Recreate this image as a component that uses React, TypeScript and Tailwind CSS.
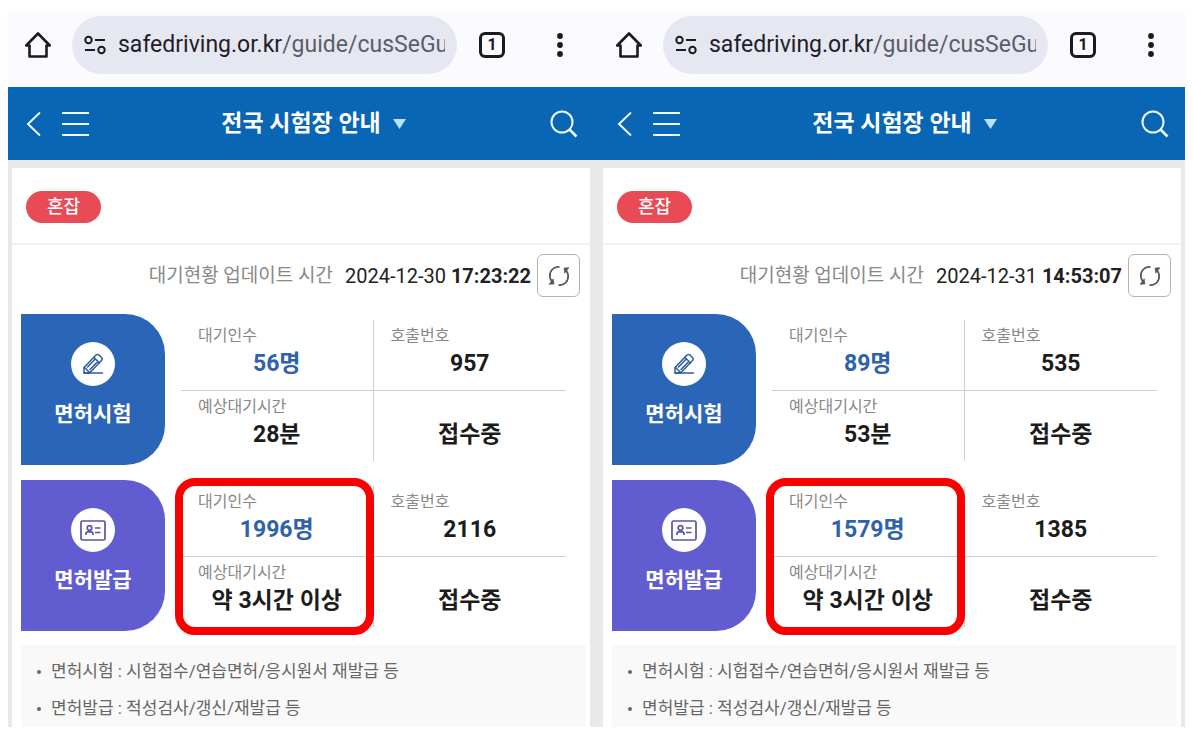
import { ReactNode } from "react";

interface Desk {
  name: string;
  kind: "exam" | "issue";
  waiting: string;
  waitTime: string;
  calling: string;
  status: string;
  highlighted?: boolean;
}

interface Snapshot {
  date: string;
  time: string;
  desks: Desk[];
}

const snapshots: Snapshot[] = [
  {
    date: "2024-12-30",
    time: "17:23:22",
    desks: [
      {
        name: "면허시험",
        kind: "exam",
        waiting: "56명",
        waitTime: "28분",
        calling: "957",
        status: "접수중",
      },
      {
        name: "면허발급",
        kind: "issue",
        waiting: "1996명",
        waitTime: "약 3시간 이상",
        calling: "2116",
        status: "접수중",
        highlighted: true,
      },
    ],
  },
  {
    date: "2024-12-31",
    time: "14:53:07",
    desks: [
      {
        name: "면허시험",
        kind: "exam",
        waiting: "89명",
        waitTime: "53분",
        calling: "535",
        status: "접수중",
      },
      {
        name: "면허발급",
        kind: "issue",
        waiting: "1579명",
        waitTime: "약 3시간 이상",
        calling: "1385",
        status: "접수중",
        highlighted: true,
      },
    ],
  },
];

const notes = [
  "면허시험 : 시험접수/연습면허/응시원서 재발급 등",
  "면허발급 : 적성검사/갱신/재발급 등",
];

function HomeIcon() {
  return (
    <svg width="28" height="28" viewBox="0 0 28 28" fill="none" stroke="#1b1b1f" strokeWidth="2.6" strokeLinejoin="round" strokeLinecap="round">
      <path d="M2.2 14.5h3.300V25.500h17V14.500h3.300L14 2.500z" />
    </svg>
  );
}

function SiteInfoIcon() {
  return (
    <svg className="shrink-0" width="22" height="20" viewBox="0 0 22 20" fill="none" stroke="#1b1b1f" strokeWidth="2">
      <circle cx="4.500" cy="5" r="3.200" />
      <path d="M11 5h10M1 15h10" />
      <circle cx="17.500" cy="15" r="3.200" />
    </svg>
  );
}

function DotsIcon() {
  return (
    <svg width="8" height="26" viewBox="0 0 8 26" fill="#1b1b1f">
      <circle cx="4" cy="4" r="2.900" />
      <circle cx="4" cy="13" r="2.900" />
      <circle cx="4" cy="22" r="2.900" />
    </svg>
  );
}

function BackIcon() {
  return (
    <svg width="16" height="26" viewBox="0 0 16 26" fill="none" stroke="#eafaff" strokeWidth="2">
      <path d="M14 1.500 2 13l12 11.500" />
    </svg>
  );
}

function MenuIcon() {
  return (
    <svg width="27" height="26" viewBox="0 0 27 26" fill="none" stroke="#eafaff" strokeWidth="2">
      <path d="M0 2h27M0 13h27M0 24h27" />
    </svg>
  );
}

function SearchIcon() {
  return (
    <svg width="28" height="28" viewBox="0 0 28 28" fill="none" stroke="#eafaff" strokeWidth="2">
      <circle cx="12" cy="12" r="10.500" />
      <path d="m19.500 19.500 7 7" strokeWidth="2.600" />
    </svg>
  );
}

function RefreshIcon() {
  return (
    <svg width="22" height="22" viewBox="0 0 22 22" fill="none" stroke="#555" strokeWidth="1.700">
      <path d="M11.500 1.800C5.500 1.500 1.200 6 1.900 12c.3 2 1.200 3.800 2.600 5.200" />
      <path d="M10.500 20.200c6 .3 10.300-4.200 9.600-10.200-.3-2-1.200-3.800-2.600-5.200" />
      <path d="M1 19.300 6 19 5.300 13.800zM21 2.700 16 3l.7 5.200z" fill="#555" strokeWidth=".6" />
    </svg>
  );
}

function PencilIcon() {
  return (
    <svg width="22" height="22" viewBox="0 0 22 22" fill="none" stroke="#2c5c9c" strokeWidth="1.500" strokeLinejoin="round" strokeLinecap="round">
      <path d="M2 20v-5.500L14 2q1.500-1.200 3 0l2.500 2.500q1.200 1.500 0 3L7.500 20z" />
      <path d="m12 4.500 5.500 5.500M2.500 14.500l5 5M5.500 14l8-8.300M8 16.500l8-8.300M2 20h18.500" />
    </svg>
  );
}

function IdCardIcon() {
  return (
    <svg width="26" height="21" viewBox="0 0 26 21" fill="none" stroke="#5a53a8" strokeWidth="1.700">
      <rect x="1" y="1" width="24" height="19" rx="1.500" />
      <circle cx="9.500" cy="8" r="2.300" />
      <path d="M6 15v-1.200q0-2 2-2h3q2 0 2 2V15M15 8h5.500M15 12.500h5.500" />
    </svg>
  );
}

function Row({ className, children }: { className: string; children: ReactNode }) {
  return <div className={`grid grid-cols-2 gap-x-[5px] ${className}`}>{children}</div>;
}

function BrowserBar() {
  return (
    <div className="flex h-[76px] items-center pb-2">
      <button aria-label="홈" className="ml-4 shrink-0">
        <HomeIcon />
      </button>
      <button className="ml-5 flex h-[58px] min-w-0 flex-1 items-center rounded-full bg-[#e5e7f1] pl-3 pr-3">
        <SiteInfoIcon />
        <span className="ml-3 min-w-0 flex-1 overflow-hidden whitespace-nowrap text-left text-[23px] leading-8 text-[#1f2029]">
          safedriving.or.kr<span className="text-[#5b5d68]">/guide/cusSeGu</span>
        </span>
      </button>
      <button
        aria-label="탭"
        className="ml-[22px] flex size-[26px] shrink-0 items-center justify-center rounded-md border-[3px] border-[#1b1b1f] text-[16px] font-bold leading-5 text-[#1b1b1f]"
      >
        1
      </button>
      <button aria-label="더보기" className="ml-[51px] mr-[30px] shrink-0">
        <DotsIcon />
      </button>
    </div>
  );
}

function TitleBar() {
  return (
    <header className="flex h-[73px] items-center pl-[18px] pr-4">
      <button aria-label="뒤로">
        <BackIcon />
      </button>
      <button aria-label="메뉴" className="ml-5">
        <MenuIcon />
      </button>
      <div className="flex flex-1 justify-center">
        <button className="flex items-center gap-3 text-[23px] font-bold leading-8 text-white">
          전국 시험장 안내
          <svg width="13" height="10" viewBox="0 0 13 10" fill="#b9e2fb">
            <path d="M0 0h13L6.500 10z" />
          </svg>
        </button>
      </div>
      <button aria-label="검색" className="ml-3">
        <SearchIcon />
      </button>
    </header>
  );
}

function Cell({ label, value, accent }: { label?: string; value: string; accent?: boolean }) {
  return (
    <div className="flex flex-col justify-end pb-2.5">
      {label && <dt className="pl-[17px] text-[16px] leading-6 text-[#888]">{label}</dt>}
      <dd
        className={`text-center text-[23px] font-bold leading-8 ${
          accent ? "text-[#2f62a8]" : "text-[#1c1c1c]"
        }`}
      >
        {value}
      </dd>
    </div>
  );
}

function DeskPanel({ desk }: { desk: Desk }) {
  const isExam = desk.kind === "exam";
  return (
    <section className="flex gap-4">
      <div
        className={`flex h-[151px] w-[144px] shrink-0 flex-col items-center rounded-r-[40px] pt-7 ${
          isExam ? "bg-[#2b65b7]" : "bg-[#615cd0]"
        }`}
      >
        <div className="flex size-11 items-center justify-center rounded-full bg-white">
          {isExam ? <PencilIcon /> : <IdCardIcon />}
        </div>
        <h2 className="mt-3 text-[21px] font-bold leading-8 text-white">{desk.name}</h2>
      </div>
      <dl className="relative mb-1 mt-1.5 grid flex-1 grid-cols-2 grid-rows-2">
        <div className="grid border-b border-r border-[#cfcfcf]">
          <Cell label="대기인수" value={desk.waiting} accent />
        </div>
        <div className="grid border-b border-[#cfcfcf]">
          <Cell label="호출번호" value={desk.calling} />
        </div>
        <div className="grid border-r border-[#cfcfcf]">
          <Cell label="예상대기시간" value={desk.waitTime} />
        </div>
        <Cell value={desk.status} />
        {desk.highlighted && (
          <div className="absolute -bottom-2 -left-1.5 -top-2 right-1/2 rounded-[20px] border-8 border-[#fb0000]" />
        )}
      </dl>
    </section>
  );
}

function StatusCard({ snapshot }: { snapshot: Snapshot }) {
  return (
    <main className="mx-1 bg-white">
      <div className="flex h-[77px] items-start border-b-2 border-[#f0f0f0] pl-3.5 pt-[23px]">
        <span className="flex h-8 w-[75px] items-center justify-center rounded-full bg-[#e84b55] text-[18px] font-medium leading-6 text-white">
          혼잡
        </span>
      </div>
      <div className="flex items-center justify-end pr-2.5 pt-[9px] leading-7">
        <span className="text-[19px] text-[#888]">대기현황 업데이트 시간</span>
        <time className="ml-3 text-[20px] text-[#222]">
          {snapshot.date} <b>{snapshot.time}</b>
        </time>
        <button
          aria-label="새로고침"
          className="ml-1.5 flex size-[43px] items-center justify-center rounded-md border border-[#b4b4b4]"
        >
          <RefreshIcon />
        </button>
      </div>
      <div className="mt-[17px] flex flex-col gap-[15px] pl-[9px] pr-6">
        {snapshot.desks.map((desk) => (
          <DeskPanel key={desk.name} desk={desk} />
        ))}
      </div>
      <ul className="ml-[9px] mr-1 mt-[14px] bg-[#f9f9f9] pl-4 pt-2 text-[17px] text-[#666]">
        {notes.map((note) => (
          <li key={note} className="flex items-center gap-2.5 leading-[37px]">
            <span className="size-1 rounded-full bg-[#666]" />
            {note}
          </li>
        ))}
      </ul>
    </main>
  );
}

export default function App() {
  return (
    <div className="bg-white pl-2 pr-[9px] pt-[11px] font-['Roboto','Noto_Sans_CJK_KR',sans-serif]">
      <Row className="bg-[#fafaff]">
        {snapshots.map((s) => (
          <BrowserBar key={s.date} />
        ))}
      </Row>
      <Row className="bg-[#0866b5]">
        {snapshots.map((s) => (
          <TitleBar key={s.date} />
        ))}
      </Row>
      <Row className="bg-[#e9e9e9] pt-2">
        {snapshots.map((s) => (
          <StatusCard key={s.date} snapshot={s} />
        ))}
      </Row>
    </div>
  );
}
